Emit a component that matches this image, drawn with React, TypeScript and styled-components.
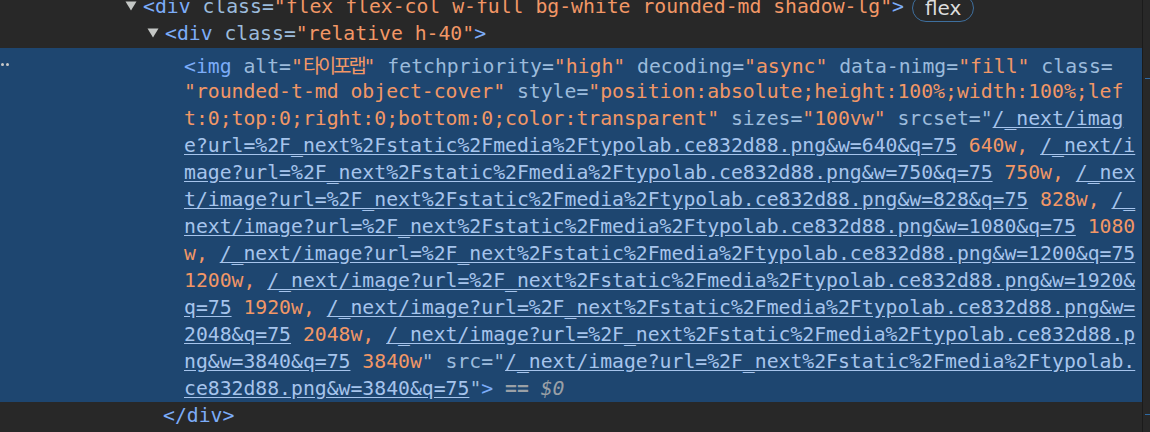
import styled, { createGlobalStyle } from 'styled-components';

type Kind = 't' | 'a' | 'v' | 'l' | 'q' | 'k' | 'm' | 'i';
type Seg = [Kind, string];

const U = '%2F_next%2Fstatic%2Fmedia%2Ftypolab.ce832d88.png';

const imgLines: Seg[][] = [
  [
    ['t', '<img'],
    ['a', ' alt='],
    ['v', '"'],
    ['k', '타이포랩'],
    ['v', '"'],
    ['a', ' fetchpriority='],
    ['v', '"high"'],
    ['a', ' decoding='],
    ['v', '"async"'],
    ['a', ' data-nimg='],
    ['v', '"fill"'],
    ['a', ' class='],
  ],
  [
    ['v', '"rounded-t-md object-cover"'],
    ['a', ' style='],
    ['v', '"position:absolute;height:100%;width:100%;lef'],
  ],
  [
    ['v', 't:0;top:0;right:0;bottom:0;color:transparent"'],
    ['a', ' sizes='],
    ['v', '"100vw"'],
    ['a', ' srcset="'],
    ['l', '/_next/imag'],
  ],
  [['l', `e?url=${U}&w=640&q=75`], ['v', ' 640w, '], ['l', '/_next/i']],
  [['l', `mage?url=${U}&w=750&q=75`], ['v', ' 750w, '], ['l', '/_nex']],
  [['l', `t/image?url=${U}&w=828&q=75`], ['v', ' 828w, '], ['l', '/_']],
  [['l', `next/image?url=${U}&w=1080&q=75`], ['v', ' 1080']],
  [['v', 'w, '], ['l', `/_next/image?url=${U}&w=1200&q=75`]],
  [['v', '1200w, '], ['l', `/_next/image?url=${U}&w=1920&`]],
  [['l', 'q=75'], ['v', ' 1920w, '], ['l', `/_next/image?url=${U}&w=`]],
  [
    ['l', '2048&q=75'],
    ['v', ' 2048w, '],
    ['l', '/_next/image?url=%2F_next%2Fstatic%2Fmedia%2Ftypolab.ce832d88.p'],
  ],
  [
    ['l', 'ng&w=3840&q=75'],
    ['v', ' 3840w'],
    ['q', '"'],
    ['a', ' src="'],
    ['l', '/_next/image?url=%2F_next%2Fstatic%2Fmedia%2Ftypolab.'],
  ],
  [
    ['l', 'ce832d88.png&w=3840&q=75'],
    ['q', '"'],
    ['t', '>'],
    ['m', ' == '],
    ['i', '$0'],
  ],
];

const renderSegs = (segs: Seg[]) =>
  segs.map(([kind, text], idx) => (
    <Token key={idx} $kind={kind}>
      {text}
    </Token>
  ));

const Triangle = () => (
  <svg width="12" height="10" viewBox="0 0 12 10">
    <path d="M0.5 0.5 L11.5 0.5 L6 9.5 Z" fill="#c4c7c5" />
  </svg>
);

const App = () => {
  return (
    <>
      <GlobalStyle />
      <Page>
        <Tree>
          <Row $indent={125}>
            <Toggle>
              <Triangle />
            </Toggle>
            <Token $kind="t">{'<div'}</Token>
            <Token $kind="a">{' class='}</Token>
            <Token $kind="v">
              "flex flex-col w-full bg-white rounded-md shadow-lg"
            </Token>
            <Token $kind="t">{'>'}</Token>
            <Badge>flex</Badge>
          </Row>
          <Row $indent={147}>
            <Toggle>
              <Triangle />
            </Toggle>
            <Token $kind="t">{'<div'}</Token>
            <Token $kind="a">{' class='}</Token>
            <Token $kind="v">"relative h-40"</Token>
            <Token $kind="t">{'>'}</Token>
          </Row>
          <Selected>
            <Dots>
              <Dot />
              <Dot />
            </Dots>
            {imgLines.map((segs, idx) => (
              <Line key={idx}>{renderSegs(segs)}</Line>
            ))}
          </Selected>
          <Row $indent={163}>
            <Token $kind="t">{'</div>'}</Token>
          </Row>
        </Tree>
        <SideEdge>
          <EdgeMark $top={78} />
          <EdgeMark $top={414} />
        </SideEdge>
      </Page>
    </>
  );
};

export default App;

const GlobalStyle = createGlobalStyle`
  html, body {
    margin: 0;
    padding: 0;
    background: #282828;
    overflow: hidden;
  }
`;

const Page = styled.div`
  display: flex;
  width: 1150px;
  height: 432px;
  overflow: hidden;
  background: #282828;
`;

const Tree = styled.div`
  display: flex;
  flex-direction: column;
  width: 1142px;
  margin-top: -7px;

  font-family: 'DejaVu Sans Mono', 'Noto Sans CJK KR', monospace;
  font-size: 19.75px;
  line-height: 27px;
  white-space: pre;
`;

const Row = styled.div<{ $indent: number }>`
  display: flex;
  align-items: center;
  height: 27px;
  padding-left: ${(props) => props.$indent}px;
`;

const Toggle = styled.span`
  display: inline-flex;
  align-items: center;
  width: 18px;
  height: 27px;
  margin-top: -1px;
`;

const Selected = styled.div`
  position: relative;
  padding: 3px 0 0 184px;
  margin-top: 1px;
  background: #1e4670;
`;

const Line = styled.div`
  height: 27px;
`;

const Dots = styled.div`
  position: absolute;
  top: 15px;
  left: 1px;
  display: flex;
  gap: 2px;
`;

const Dot = styled.span`
  width: 3px;
  height: 3px;
  border-radius: 50%;
  background: #c8c8c8;
`;

const tokenColors: Record<Kind, string> = {
  t: '#7cacf8',
  a: '#9bbbdc',
  v: '#f29766',
  l: '#a6c4ec',
  q: '#9bbbdc',
  k: '#f29766',
  m: '#9aa0a6',
  i: '#9aa0a6',
};

const Token = styled.span<{ $kind: Kind }>`
  color: ${(props) => tokenColors[props.$kind]};
  ${(props) =>
    props.$kind === 'l' &&
    'text-decoration: underline; text-underline-offset: 2px;'}
  ${(props) =>
    props.$kind === 'k' &&
    "font-family: 'Noto Sans CJK KR', sans-serif; letter-spacing: -3px;"}
  ${(props) => props.$kind === 'i' && 'font-style: italic;'}
  ${(props) => props.$kind === 'm' && 'font-weight: 700;'}
`;

const Badge = styled.span`
  display: inline-flex;
  align-items: center;
  height: 28px;
  margin-left: 8px;
  margin-top: 2px;
  padding: 0 12px;
  box-sizing: border-box;

  border: 1px solid #3e6f9e;
  border-radius: 14px;
  color: #dcdcdc;
  font-family: 'DejaVu Sans', sans-serif;
  font-size: 20px;
  line-height: 1;
`;

const SideEdge = styled.div`
  position: relative;
  flex: 1;
  border-left: 1px solid #1b1b1b;
`;

const EdgeMark = styled.div<{ $top: number }>`
  position: absolute;
  top: ${(props) => props.$top}px;
  left: 2px;
  right: 0;
  height: 1px;
  background: #2f6aa3;
`;
